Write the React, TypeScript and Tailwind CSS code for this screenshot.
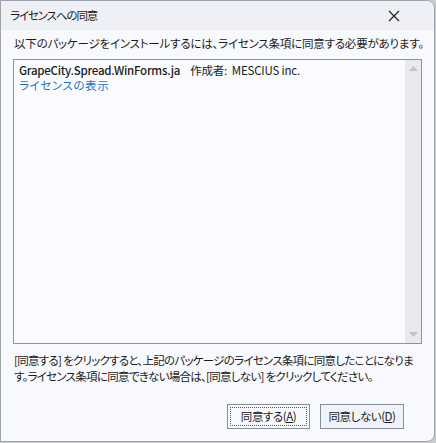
import React from 'react';

const font = "font-['Noto_Sans_CJK_JP',sans-serif] [font-feature-settings:'palt']";

const App = () => {
  return (
    <div className={`w-[436px] h-[443px] bg-[#c9cbd0] ${font} text-[11.5px] tracking-[-0.45px] text-[#1b1b1b]`}>
      <div className="w-[435px] h-[442px] flex flex-col border border-[#9ea2aa] rounded-tr-lg rounded-br-lg bg-[#f8f9fd] overflow-hidden">
        {/* Title bar */}
        <div className="h-[29px] shrink-0 flex items-center justify-between bg-[#eff0f5] pl-[9px] pr-[34px]">
          <span className="leading-none tracking-[-1.1px]">ライセンスへの同意</span>
          <svg width="12" height="12" viewBox="0 0 12 12">
            <path d="M1 1 L11 11 M11 1 L1 11" stroke="#1b1b1b" strokeWidth="1.1" />
          </svg>
        </div>

        <div className="flex-1 flex flex-col px-[12px] pt-[5px]">
          <p className="leading-[16px] pl-[1px] tracking-[-0.2px] whitespace-nowrap">
            以下のパッケージをインストールするには、ライセンス条項に同意する必要があります。
          </p>

          {/* List box */}
          <div className="mt-[8px] h-[285px] flex border border-[#8c93a2] bg-[#fafbfe]">
            <div className="flex-1 pl-[5px] pt-[3px] leading-[15px]">
              <div className="whitespace-nowrap">
                <span className="font-medium tracking-[-0.25px]">GrapeCity.Spread.WinForms.ja</span>
                <span className="ml-[10px] tracking-[-0.2px]">作成者:&nbsp; MESCIUS inc.</span>
              </div>
              <div className="text-[#1a73c7] tracking-[0.6px]">ライセンスの表示</div>
            </div>
            <div className="w-[16px] flex flex-col justify-between items-center bg-[#e9eaee] py-[6px]">
              <svg width="9" height="5" viewBox="0 0 9 5">
                <path d="M0 5 L4.5 0 L9 5 Z" fill="#c3c5cb" />
              </svg>
              <svg width="9" height="5" viewBox="0 0 9 5">
                <path d="M0 0 L4.5 5 L9 0 Z" fill="#c3c5cb" />
              </svg>
            </div>
          </div>

          <p className="mt-[8px] pl-[1px] leading-[16px] whitespace-nowrap tracking-[-0.72px]">
            [同意する] をクリックすると、上記のパッケージのライセンス条項に同意したことになりま
            <br />
            す。ライセンス条項に同意できない場合は、[同意しない] をクリックしてください。
          </p>

          <div className="mt-auto mb-[12px] flex justify-end gap-[10px] pr-[18px]">
            <button className="w-[83px] h-[25px] border border-[#858d9c] bg-[#f8f9fd] p-[2px]">
              <span className="flex h-full w-full items-center justify-center border border-dotted border-[#555]">
                同意する(<span className="underline">A</span>)
              </span>
            </button>
            <button className="w-[84px] h-[25px] border border-[#858d9c] bg-[#f0f3fa] flex items-center justify-center">
              同意しない(<span className="underline">D</span>)
            </button>
          </div>
        </div>
      </div>
    </div>
  );
};

export default App;
